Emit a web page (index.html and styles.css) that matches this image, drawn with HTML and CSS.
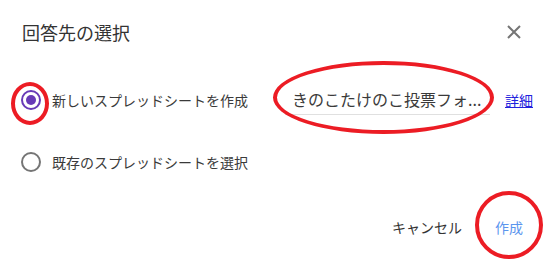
FILE: index.html
```html
<!DOCTYPE html>
<html lang="ja">
<head>
    <meta charset="UTF-8">
    <title>回答先の選択</title>
    <link rel="stylesheet" href="styles.css">
</head>
<body>
    <div class="dialog">
        <div class="header">
            <h1>回答先の選択</h1>
            <svg class="close" width="14" height="14" viewBox="0 0 14 14">
                <path d="M1 1L13 13M13 1L1 13" stroke="#757575" stroke-width="2"/>
            </svg>
        </div>

        <div class="option">
            <span class="radio checked"></span>
            <span class="label">新しいスプレッドシートを作成</span>
            <div class="input">きのこたけのこ投票フォ...</div>
            <a class="link" href="#">詳細</a>
        </div>

        <div class="option second">
            <span class="radio"></span>
            <span class="label">既存のスプレッドシートを選択</span>
        </div>

        <div class="footer">
            <span class="btn">キャンセル</span>
            <span class="btn primary">作成</span>
        </div>

        <!-- red annotation marks -->
        <div class="mark mark-radio"></div>
        <div class="mark mark-input"></div>
        <div class="mark mark-btn"></div>
    </div>
</body>
</html>
```

FILE: styles.css
```css
body {
    margin: 0;
    background: #fff;
    font-family: "Noto Sans CJK JP", "Noto Sans", sans-serif;
    color: #333;
}
.dialog {
    position: relative;
    width: 555px;
    height: 260px;
    overflow: hidden;
}
.header {
    display: flex;
    justify-content: space-between;
    align-items: center;
    height: 24px;
    padding: 20px 34px 0 22px;
}
.header h1 {
    margin: 0;
    font-size: 18px;
    font-weight: normal;
    line-height: 24px;
    color: #333;
}
.option {
    display: flex;
    align-items: center;
    height: 40px;
    margin-top: 36px;
    padding-left: 21px;
}
.option.second {
    margin-top: 22px;
}
.radio {
    box-sizing: border-box;
    width: 20px;
    height: 20px;
    border: 2px solid #757575;
    border-radius: 50%;
    display: flex;
    align-items: center;
    justify-content: center;
    flex-shrink: 0;
}
.radio.checked {
    border-color: #673ab7;
}
.radio.checked::after {
    content: "";
    width: 10px;
    height: 10px;
    border-radius: 50%;
    background: #673ab7;
}
.label {
    width: 233px;
    margin-left: 11px;
    font-size: 14px;
    color: #3a3a3a;
    white-space: nowrap;
}
.input {
    width: 198px;
    padding: 0 0 3px 7px;
    border-bottom: 1px solid #e0e0e0;
    font-size: 16px;
    line-height: 24px;
    color: #3a3a3a;
    white-space: nowrap;
    margin-top: 2px;
}
.link {
    margin-left: 15px;
    font-size: 14px;
    color: #2222dd;
}
.footer {
    display: flex;
    justify-content: flex-end;
    align-items: center;
    gap: 33px;
    margin-top: 35px;
    padding-right: 32px;
}
.btn {
    font-size: 14px;
    line-height: 20px;
    color: #333;
}
.btn.primary {
    color: #5b95ee;
}
.mark {
    position: absolute;
    box-sizing: border-box;
    border: 4px solid #ec1c24;
    border-radius: 50%;
}
.mark-radio {
    left: 11px;
    top: 82px;
    width: 38px;
    height: 43px;
}
.mark-input {
    left: 273px;
    top: 61px;
    width: 221px;
    height: 73px;
}
.mark-btn {
    left: 475px;
    top: 191px;
    width: 68px;
    height: 68px;
}
```
